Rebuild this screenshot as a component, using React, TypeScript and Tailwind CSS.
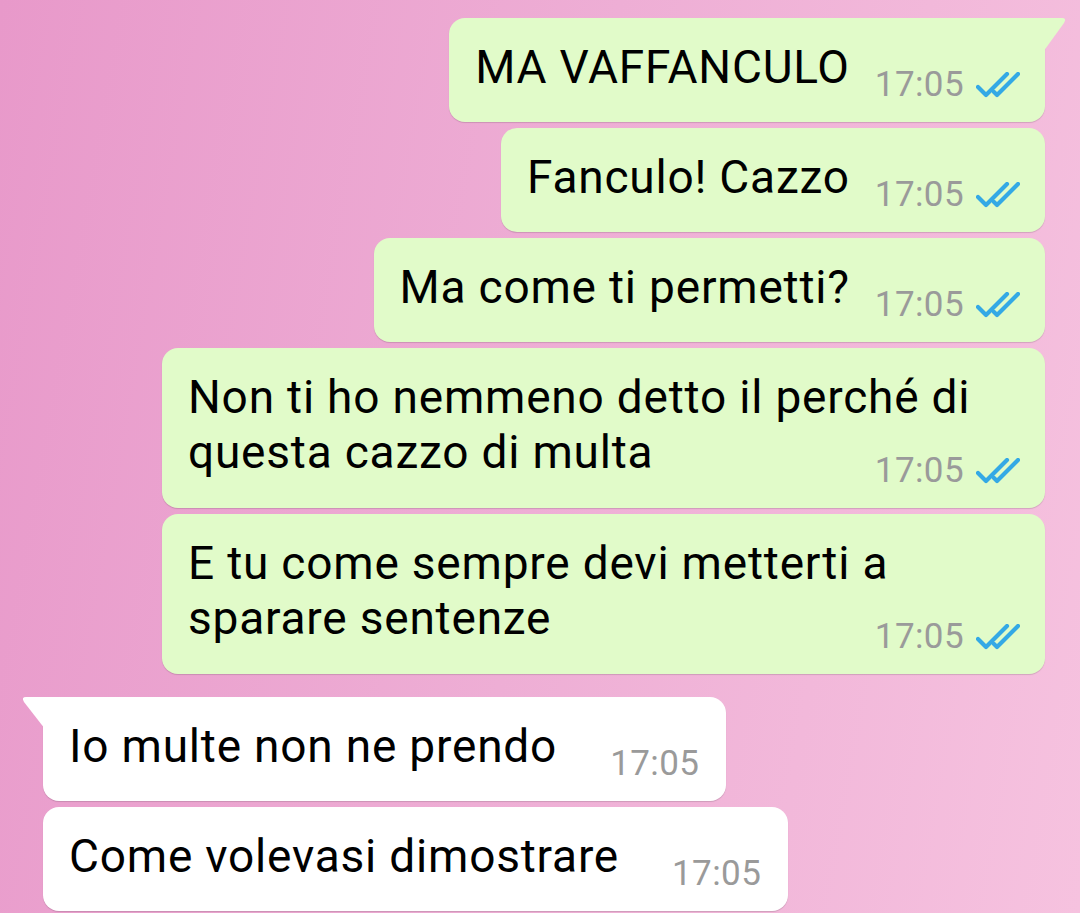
import React from "react";

type Msg = {
  text: string;
  out: boolean;
  multi?: boolean;
  tail?: boolean;
};

const messages: Msg[] = [
  { text: "MA VAFFANCULO", out: true, tail: true },
  { text: "Fanculo! Cazzo", out: true },
  { text: "Ma come ti permetti?", out: true },
  { text: "Non ti ho nemmeno detto il perché di questa cazzo di multa", out: true, multi: true },
  { text: "E tu come sempre devi metterti a sparare sentenze", out: true, multi: true },
  { text: "Io multe non ne prendo", out: false, tail: true },
  { text: "Come volevasi dimostrare", out: false },
];

const Ticks = () => (
  <svg width="44" height="26" viewBox="0 0 44 26" className="ml-[12px] mb-[7px]">
    <path d="M2 15 L10 23 L31 2" fill="none" stroke="#34a9e5" strokeWidth="4.2" strokeLinecap="round" strokeLinejoin="round" />
    <path d="M18 20 L21 23 L42 2" fill="none" stroke="#34a9e5" strokeWidth="4.2" strokeLinecap="round" strokeLinejoin="round" />
  </svg>
);

const Time = ({ out }: { out: boolean }) => (
  <div className="flex items-end">
    <span className="text-[35px] leading-[40px] tracking-[0.4px] text-[#9a9a9a]">17:05</span>
    {out && <Ticks />}
  </div>
);

const Bubble = ({ m }: { m: Msg }) => {
  const bg = m.out ? "bg-[#e1fbc9]" : "bg-white";
  const corner = m.tail ? (m.out ? "rounded-tr-none" : "rounded-tl-none") : "";
  return (
    <div className={`flex ${m.out ? "justify-end pr-[35px]" : "justify-start pl-[43px]"}`}>
      <div
        className={`relative ${bg} ${corner} rounded-[16px] shadow-[0_1px_1px_rgba(0,0,0,0.14)] ${
          m.multi ? "flex w-[883px] flex-col" : "flex items-end"
        }`}
      >
        {/* bubble tail */}
        {m.tail && m.out && (
          <svg width="24" height="34" viewBox="0 0 24 34" className="absolute -right-[22px] top-0">
            <path d="M0 0 H19 Q24 0 21 5 L0 34 Z" fill="#e1fbc9" />
          </svg>
        )}
        {m.tail && !m.out && (
          <svg width="24" height="32" viewBox="0 0 24 32" className="absolute -left-[22px] top-0">
            <path d="M24 0 H5 Q0 0 3 5 L24 32 Z" fill="#ffffff" />
          </svg>
        )}
        {m.multi ? (
          <>
            <p className="pl-[26px] pr-[30px] pt-[22px] text-[46px] leading-[55px] tracking-[0.8px] text-black">
              {m.text}
            </p>
            <div className="-mt-[29px] flex justify-end pb-[17px] pr-[25px]">
              <Time out={m.out} />
            </div>
          </>
        ) : (
          <>
            <p className="pb-[27px] pl-[26px] pt-[22px] text-[46px] leading-[55px] tracking-[0.8px] whitespace-nowrap text-black">
              {m.text}
            </p>
            <div className={`mb-[17px] ${m.out ? "ml-[25px] mr-[25px]" : "ml-[53px] mr-[27px]"}`}>
              <Time out={m.out} />
            </div>
          </>
        )}
      </div>
    </div>
  );
};

export default function App() {
  return (
    <div
      className="h-[913px] w-[1080px] overflow-hidden bg-[linear-gradient(100deg,#e899ca_0%,#eeaed5_50%,#f6c2df_100%)] pt-[18px]"
      style={{ fontFamily: "Roboto, 'Noto Sans', sans-serif" }}
    >
      <div className="flex flex-col">
        {messages.map((m, i) => (
          <div key={i} className={i === 0 ? "" : i === 5 ? "mt-[23px]" : "mt-[6px]"}>
            <Bubble m={m} />
          </div>
        ))}
      </div>
    </div>
  );
}
